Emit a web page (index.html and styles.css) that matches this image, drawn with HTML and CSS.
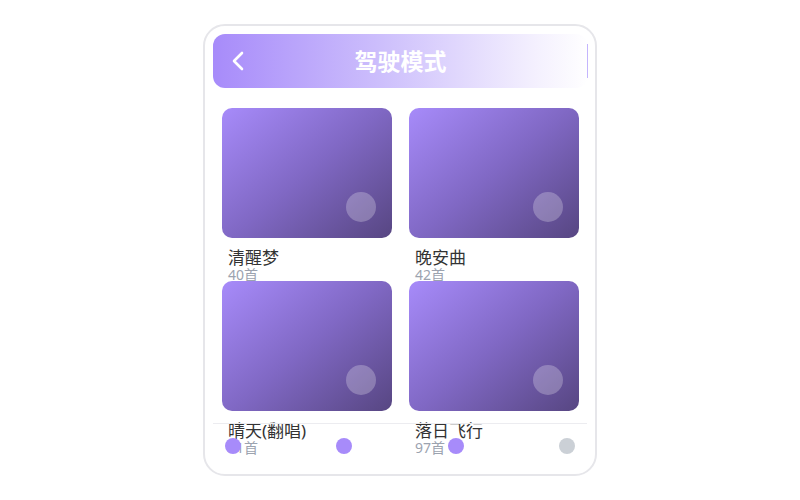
FILE: index.html
```html
<!DOCTYPE html>
<html lang="zh-CN">
<head>
    <meta charset="UTF-8">
    <meta name="viewport" content="width=device-width, initial-scale=1.0">
    <title>驾驶模式</title>
    <link rel="stylesheet" href="styles.css">
</head>
<body>
    <div class="phone">
        <div class="header">
            <svg class="back" width="14" height="20" viewBox="0 0 14 20">
                <polyline points="11,2 3,10 11,18" fill="none" stroke="#fff" stroke-width="2.6" stroke-linecap="round" stroke-linejoin="round"/>
            </svg>
            <h1>驾驶模式</h1>
            <span class="spacer"></span>
        </div>

        <div class="list">
            <div class="item">
                <div class="cover"><span class="play"></span></div>
                <div class="name">清醒梦</div>
                <div class="count">40首</div>
            </div>
            <div class="item">
                <div class="cover"><span class="play"></span></div>
                <div class="name">晚安曲</div>
                <div class="count">42首</div>
            </div>
            <div class="item">
                <div class="cover"><span class="play"></span></div>
                <div class="name">晴天(翻唱)</div>
                <div class="count">31首</div>
            </div>
            <div class="item">
                <div class="cover"><span class="play"></span></div>
                <div class="name">落日飞行</div>
                <div class="count">97首</div>
            </div>
        </div>

        <!-- 底部指示点 -->
        <div class="dots">
            <span class="dot on"></span>
            <span class="dot on"></span>
            <span class="dot on"></span>
            <span class="dot"></span>
        </div>
    </div>
</body>
</html>
```

FILE: styles.css
```css
body {
    margin: 0;
    height: 500px;
    display: flex;
    align-items: center;
    justify-content: center;
    background: #ffffff;
    font-family: 'Noto Sans', 'Noto Sans CJK SC', sans-serif;
}
.phone {
    position: relative;
    width: 394px;
    height: 452px;
    box-sizing: border-box;
    border: 2px solid #e6e6ea;
    border-radius: 22px;
    padding: 8px;
    overflow: hidden;
    background: #ffffff;
}
.header {
    position: relative;
    height: 54px;
    border-radius: 12px;
    background: linear-gradient(90deg, #a78bfa 0%, #cdbffc 45%, #f3effe 85%, #ffffff 100%);
    display: flex;
    align-items: center;
    padding: 0 18px;
    width: 375px;
    box-sizing: border-box;
}
.header::after {
    content: '';
    position: absolute;
    right: 0;
    top: 10px;
    bottom: 10px;
    width: 1px;
    background: #c4b5fd;
}
.back, .spacer {
    width: 14px;
    flex: none;
}
.header h1 {
    flex: 1;
    margin: 0;
    text-align: center;
    color: #ffffff;
    font-size: 23px;
    font-weight: 700;
    line-height: 1;
}
.list {
    display: grid;
    grid-template-columns: 170px 170px;
    grid-auto-rows: 173px;
    column-gap: 17px;
    padding: 20px 9px 0;
}
.cover {
    position: relative;
    height: 130px;
    border-radius: 10px;
    background: linear-gradient(140deg, #a78bfa 0%, #8068c4 50%, #574682 100%);
}
.play {
    position: absolute;
    right: 16px;
    bottom: 16px;
    width: 30px;
    height: 30px;
    border-radius: 50%;
    background: rgba(255, 255, 255, 0.25);
}
.name {
    margin-top: 11px;
    padding-left: 6px;
    font-size: 17px;
    line-height: 18px;
    color: #333333;
}
.count {
    padding-left: 6px;
    font-size: 14px;
    line-height: 16px;
    color: #9ca3af;
}
.dots {
    position: absolute;
    left: 8px;
    right: 8px;
    bottom: 6px;
    height: 44px;
    border-top: 1px solid #ececf0;
    display: flex;
    align-items: center;
    justify-content: space-between;
    padding: 0 12px;
}
.dot {
    width: 16px;
    height: 16px;
    border-radius: 50%;
    background: #cbd0d6;
}
.dot.on {
    background: #a78bfa;
}
```
